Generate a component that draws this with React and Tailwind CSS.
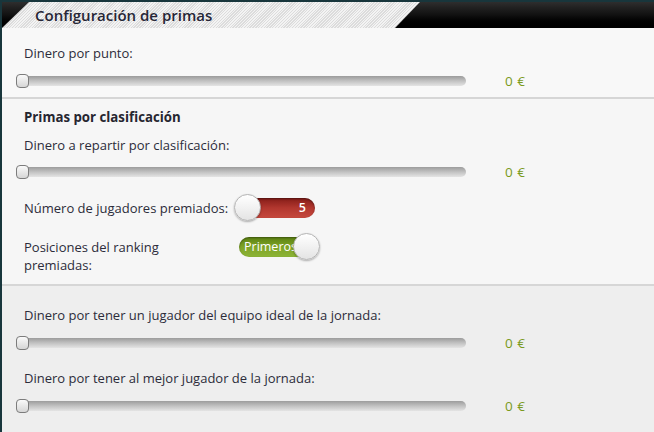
import React from 'react';

const FONT = { fontFamily: '"Open Sans", "Noto Sans", sans-serif' };

function Slider() {
  return (
    <div className="flex items-center h-4">
      <div className="relative w-[450px] h-[10px] ml-[14px] rounded-r-[5px] rounded-l-[3px] bg-gradient-to-b from-[#9c9c9c] via-[#c2c2c2] to-[#e4e4e4]">
        <div className="absolute left-0 top-[-2px] w-[13px] h-[14px] rounded-[4px] border border-[#7c7c7c] bg-gradient-to-b from-[#fafafa] to-[#d6d6d6]" />
      </div>
      <span className="ml-[39px] text-[13.5px] text-[#7a9a1c] tracking-[0.5px]">0 €</span>
    </div>
  );
}

function Label({ children, className = '' }) {
  return <p className={`text-[13px] leading-[18px] text-[#2c2c3a] ${className}`}>{children}</p>;
}

function Knob({ className = '' }) {
  return (
    <div className={`absolute top-[-4px] w-[27px] h-[27px] rounded-full border border-[#b4b4b4] bg-gradient-to-b from-white to-[#e4e4e4] shadow-[0_1px_2px_rgba(0,0,0,0.3)] ${className}`} />
  );
}

export default function App() {
  return (
    <div className="w-[654px] h-[432px] overflow-hidden border-l-2 border-t-2 border-[#18363c] bg-[#f8f8f8]" style={FONT}>
      {/* header */}
      <div className="relative h-[26px] bg-gradient-to-b from-[#2e2e2e] via-[#111] to-black">
        <div className="absolute left-0 top-0 h-[26px] w-[420px] [clip-path:polygon(27px_0,418px_0,393px_100%,0_100%)] bg-[repeating-linear-gradient(135deg,#f3f3f3_0px,#f3f3f3_1px,#dcdcdc_1px,#dcdcdc_2px)]">
          <h1 className="pl-[33px] text-[15px] leading-[27px] font-semibold text-[#262636]">Configuración de primas</h1>
        </div>
      </div>

      {/* section 1 */}
      <div className="pt-[16px] pb-[8px] border-b-2 border-[#d6d6d6]">
        <Label className="pl-[22px]">Dinero por punto:</Label>
        <div className="mt-[11px]">
          <Slider />
        </div>
      </div>

      {/* section 2 */}
      <div className="pt-[9px] pb-[10px] border-b-2 border-[#d6d6d6] bg-[#f6f6f6]">
        <h2 className="pl-[22px] text-[13.25px] leading-[18px] font-bold text-[#262630]">Primas por clasificación</h2>
        <Label className="pl-[22px] mt-[10px]">Dinero a repartir por clasificación:</Label>
        <div className="mt-[10px]">
          <Slider />
        </div>
        <div className="flex items-center mt-[15px] h-[26px]">
          <Label className="pl-[22px] w-[233px]">Número de jugadores premiados:</Label>
          <div className="relative w-[80px] h-[20px] rounded-full bg-gradient-to-b from-[#861c18] via-[#b2372f] to-[#c6493e] shadow-[inset_0_1px_2px_rgba(0,0,0,0.4)]">
            <span className="absolute right-[9px] top-0 leading-[20px] text-[12.5px] text-white font-semibold">5</span>
            <Knob className="left-[-1px]" />
          </div>
        </div>
        <div className="flex items-start mt-[16px]">
          <Label className="pl-[22px] w-[237px] mt-[1px]">Posiciones del ranking<br />premiadas:</Label>
          <div className="relative w-[80px] h-[20px] rounded-full bg-gradient-to-b from-[#5c8212] via-[#7ea426] to-[#8db437] shadow-[inset_0_1px_2px_rgba(0,0,0,0.35)]">
            <span className="absolute left-[5px] top-0 leading-[20px] text-[12.5px] text-white">Primeros</span>
            <Knob className="right-[-1px]" />
          </div>
        </div>
      </div>

      {/* section 3 */}
      <div className="pt-[20px] bg-[#eeeeee] h-full">
        <Label className="pl-[22px]">Dinero por tener un jugador del equipo ideal de la jornada:</Label>
        <div className="mt-[11px]">
          <Slider />
        </div>
        <Label className="pl-[22px] mt-[18px]">Dinero por tener al mejor jugador de la jornada:</Label>
        <div className="mt-[11px]">
          <Slider />
        </div>
      </div>
    </div>
  );
}
